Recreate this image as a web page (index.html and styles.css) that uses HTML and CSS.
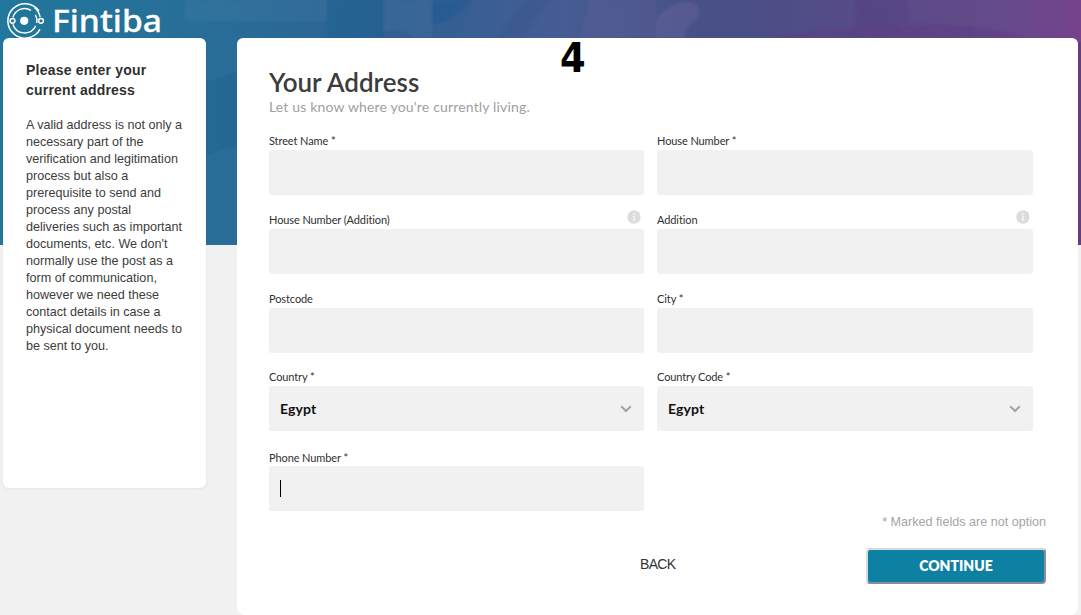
FILE: index.html
```html
<!DOCTYPE html>
<html lang="en">
<head>
<meta charset="utf-8">
<title>Fintiba - Your Address</title>
<link rel="stylesheet" href="styles.css">
</head>
<body>
<svg class="backdrop" width="1081" height="245" viewBox="0 0 1081 245" aria-hidden="true">
  <defs>
    <linearGradient id="hero" x1="0" x2="1" y1="0" y2="0">
      <stop offset="0" stop-color="#21779c"/>
      <stop offset=".2" stop-color="#286d98"/>
      <stop offset=".38" stop-color="#2f6094"/>
      <stop offset=".52" stop-color="#465c93"/>
      <stop offset=".66" stop-color="#485086"/>
      <stop offset=".8" stop-color="#574b88"/>
      <stop offset=".94" stop-color="#674a89"/>
      <stop offset="1" stop-color="#75418a"/>
    </linearGradient>
    <pattern id="keys" width="9" height="5" patternUnits="userSpaceOnUse" patternTransform="rotate(-4)">
      <path d="M0 2h6" stroke="#3e2f78" stroke-width="2" opacity=".22"/>
    </pattern>
    <filter id="soft" x="-10%" y="-10%" width="120%" height="120%"><feGaussianBlur stdDeviation="1.2"/></filter>
  </defs>
  <path fill="url(#hero)" d="M0 0h1081v245H0z"/>
  <g filter="url(#soft)">
    <path fill="#fff" opacity=".035" d="M185 0h141v21H185z"/>
    <path fill="#155586" opacity=".16" d="M326 0h58v38h-58z"/>
    <path fill="#6484aa" opacity=".14" d="M384 0h48v38h-48z"/>
    <path fill="#164f8b" opacity=".22" d="M432 0h40q-14 19-40 25z"/>
    <path fill="#2c4c80" opacity=".22" d="M375 38q20-16 40 0zM525 0h25l-28 38h-25z"/>
    <path fill="#7465a0" opacity=".2" d="M590 0h66v38h-76z"/>
    <path fill="#8d78a5" opacity=".22" d="M656 18Q675 0 691 2q13 5 5 17-11 9-12 19h-28z"/>
    <path fill="#4b347a" opacity=".22" d="M855 0h53v22l-52 7z"/>
    <path fill="#5e3b86" opacity=".45" d="M770 38q95-17 170-14 45 2 90 14z"/>
    <path fill="url(#keys)" d="M815 38q65-13 125-13 35 2 70 13z"/>
  </g>
  <path fill="#155585" opacity=".2" d="M206 82l31-10v72l-31 11z"/>
  <path fill="#29246a" opacity=".2" d="M1078 42h3v203h-3z"/>
</svg>
<div class="page">
  <header class="brand">
    <svg class="logo" width="240" height="38" viewBox="0 0 240 38" role="img" aria-label="Fintiba">
      <g fill="none" stroke="#fff">
        <path stroke-width="1.5" d="M38.9 10.7A17.2 17.2 0 1 0 40 29.4"/>
        <path stroke-width="1.4" d="M12.9 17.4A12.2 12.2 0 0 1 31 10.3M40.1 17.1A16.8 16.8 0 0 0 34.2 7.1M12.9 24.2A12.2 12.2 0 0 0 35.7 25.8M35.4 14.8A12.2 12.2 0 0 1 36.8 23"/>
        <circle cx="12.5" cy="20.8" r="2.4" stroke-width="1.5"/>
        <circle cx="41" cy="20.8" r="2.4" stroke-width="1.5"/>
      </g>
      <circle cx="24.2" cy="20.8" r="4.1" fill="#fff"/>
      <text class="logo-text" x="52" y="32" textLength="110" lengthAdjust="spacingAndGlyphs">Fintiba</text>
    </svg>
  </header>
  <div class="columns">
    <aside class="help">
      <h2 class="help-title">Please enter your<br>current address</h2>
      <p class="help-text">A valid address is not only a<br>necessary part of the<br>verification and legitimation<br>process but also a<br>prerequisite to send and<br>process any postal<br>deliveries such as important<br>documents, etc. We don't<br>normally use the post as a<br>form of communication,<br>however we need these<br>contact details in case a<br>physical document needs to<br>be sent to you.</p>
    </aside>
    <main class="panel">
      <span class="step">4</span>
      <h1 class="title">Your Address</h1>
      <p class="subtitle">Let us know where you're currently living.</p>
      <form class="fields">
        <div class="field"><span class="label">Street Name *</span><div class="box"></div></div>
        <div class="field"><span class="label">House Number *</span><div class="box"></div></div>
        <div class="field"><span class="label">House Number (Addition)<svg class="info" width="14" height="14" viewBox="0 0 14 14"><circle cx="7" cy="7" r="6.7" fill="#dcdcdc"/><path d="M6.2 3.1h1.7v1.5H6.2zM5.5 5.7h2.3v3.8h.8v1H5.5v-1h.8V6.7h-.8z" fill="#f5f5f5"/></svg></span><div class="box"></div></div>
        <div class="field"><span class="label">Addition<svg class="info" width="14" height="14" viewBox="0 0 14 14"><circle cx="7" cy="7" r="6.7" fill="#dcdcdc"/><path d="M6.2 3.1h1.7v1.5H6.2zM5.5 5.7h2.3v3.8h.8v1H5.5v-1h.8V6.7h-.8z" fill="#f5f5f5"/></svg></span><div class="box"></div></div>
        <div class="field"><span class="label">Postcode</span><div class="box"></div></div>
        <div class="field"><span class="label">City *</span><div class="box"></div></div>
        <div class="field"><span class="label">Country *</span><div class="box select">Egypt<svg width="12" height="8" viewBox="0 0 12 8"><path d="M1.2 1.3L6 6l4.8-4.7" fill="none" stroke="#a3a3a3" stroke-width="2"/></svg></div></div>
        <div class="field"><span class="label">Country Code *</span><div class="box select">Egypt<svg width="12" height="8" viewBox="0 0 12 8"><path d="M1.2 1.3L6 6l4.8-4.7" fill="none" stroke="#a3a3a3" stroke-width="2"/></svg></div></div>
        <div class="field"><span class="label label-low">Phone Number *</span><div class="box"><span class="caret"></span></div></div>
      </form>
      <p class="note">* Marked fields are not option</p>
      <div class="actions">
        <a class="back">BACK</a>
        <button class="continue" type="button">CONTINUE</button>
      </div>
    </main>
  </div>
</div>
</body>
</html>
```

FILE: styles.css
```css
* { box-sizing: border-box; }
body {
  margin: 0;
  height: 615px;
  overflow: hidden;
  background: #f1f1f1;
  font-family: "Liberation Sans", Arial, sans-serif;
}
h1, h2, p { margin: 0; }
.backdrop { position: absolute; top: 0; left: 0; display: block; }
.page { position: relative; height: 615px; display: flex; flex-direction: column; }
.brand { height: 38px; flex: none; }
.logo { display: block; overflow: visible; }
.logo-text { font: 500 31.5px/1 "Noto Sans", sans-serif; fill: #fff; stroke: #fff; stroke-width: .3px; }
.columns { display: flex; align-items: flex-start; gap: 31px; padding: 0 3px; }
.help {
  width: 203px;
  height: 450px;
  flex: none;
  padding: 22px 18px 0 23px;
  background: #fff;
  border-radius: 6px;
  box-shadow: 0 1px 3px rgba(0, 0, 0, .06);
  white-space: nowrap;
}
.help-title { font-size: 14px; line-height: 20px; letter-spacing: .22px; color: #303030; }
.help-text { margin-top: 17px; font-size: 12.6px; line-height: 17px; color: #3c3c3c; }
.panel {
  position: relative;
  width: 841px;
  height: 577px;
  flex: none;
  padding: 27px 32px 0;
  background: #fff;
  border-radius: 6px 6px 8px 8px;
  font-family: Lato, sans-serif;
}
.step {
  position: absolute;
  top: -4px;
  left: 323px;
  font: bold 41px/48px "DejaVu Sans Condensed", "DejaVu Sans", sans-serif;
  color: #000;
}
.title { font-size: 26px; line-height: 34px; font-weight: 600; color: #3c3c3c; }
.subtitle { font-size: 14px; line-height: 16px; letter-spacing: .17px; color: #a0a0a0; }
.fields {
  display: grid;
  grid-template-columns: 375px 376px;
  grid-template-rows: 80px 79px 79px 78px 80px;
  column-gap: 13px;
}
.field { display: flex; flex-direction: column; justify-content: flex-end; }
.label {
  display: flex;
  justify-content: space-between;
  height: 17px;
  font-size: 11px;
  line-height: 16px;
  letter-spacing: -.1px;
  color: #303030;
}
.label-low { height: 16px; }
.info { margin: -2px 3px 0 0; }
.box {
  height: 45px;
  flex: none;
  display: flex;
  align-items: center;
  padding: 0 11px;
  background: #f1f1f1;
  border-radius: 3px;
}
.select {
  justify-content: space-between;
  padding: 0 12px 0 11px;
  font-size: 14px;
  font-weight: bold;
  letter-spacing: .15px;
  color: #111;
}
.caret { width: 1px; height: 17px; background: #000; }
.note {
  margin-top: 3px;
  text-align: right;
  font: 12.6px/16px "Liberation Sans", Arial, sans-serif;
  color: #a5a5a5;
}
.actions { display: flex; align-items: flex-start; padding-left: 371px; margin-top: 18px; }
.back { width: 226px; font: 14px/32px "Liberation Sans", Arial, sans-serif; letter-spacing: -.7px; color: #333; }
.continue {
  width: 180px;
  height: 36px;
  flex: none;
  padding: 0 0 1px;
  border: 2px solid;
  border-color: #d5dadc #8c8c98 #8c8c98 #d5dadc;
  border-radius: 4px;
  background: #0e80a2;
  color: #fff;
  font: 800 14px Lato, sans-serif;
}
```
